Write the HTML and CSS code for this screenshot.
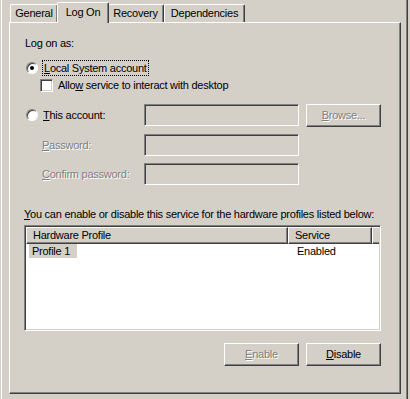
FILE: index.html
```html
<!DOCTYPE html>
<html lang="en">

<head>
    <meta charset="UTF-8">
    <title>Service Properties - Log On</title>
    <link rel="stylesheet" href="styles.css">
</head>

<body>
    <div class="window">
        <!-- Tabs -->
        <div class="tabs">
            <div class="tab tab-general">General</div>
            <div class="tab active tab-logon">Log On</div>
            <div class="tab tab-recovery">Recovery</div>
            <div class="tab tab-deps">Dependencies</div>
        </div>

        <div class="panel">
            <div class="caption">Log on as:</div>

            <div class="option-row">
                <span class="radio checked"></span>
                <span class="focus"><u>L</u>ocal System account</span>
            </div>

            <div class="check-row">
                <span class="checkbox"></span>
                <span>Allo<u>w</u> service to interact with desktop</span>
            </div>

            <!-- This account -->
            <div class="account">
                <div class="option-row inline">
                    <span class="radio"></span>
                    <span><u>T</u>his account:</span>
                </div>
                <div class="field"></div>
                <div class="btn disabled"><span><u>B</u>rowse...</span></div>

                <div class="field-label disabled"><u>P</u>assword:</div>
                <div class="field"></div>
                <div></div>

                <div class="field-label disabled"><u>C</u>onfirm password:</div>
                <div class="field"></div>
                <div></div>
            </div>

            <div class="caption profiles-caption"><u>Y</u>ou can enable or disable this service for the hardware profiles listed below:</div>

            <!-- Hardware profiles list -->
            <div class="list">
                <div class="list-head">
                    <div class="col-head col-profile">Hardware Profile</div>
                    <div class="col-head col-service">Service</div>
                    <div class="col-head col-fill"></div>
                </div>
                <div class="list-row">
                    <div class="cell-profile"><span class="selected">Profile 1</span></div>
                    <div class="cell-service">Enabled</div>
                </div>
            </div>

            <div class="buttons">
                <div class="btn disabled"><span><u>E</u>nable</span></div>
                <div class="btn"><span><u>D</u>isable</span></div>
            </div>
        </div>
    </div>
</body>

</html>
```

FILE: styles.css
```css
body {
    margin: 0;
    padding: 0;
    background-color: #d4d0c8;
    font-family: "Liberation Sans", Arial, sans-serif;
    font-size: 11px;
    line-height: 13px;
    letter-spacing: -0.25px;
    color: #000;
}

u {
    text-decoration: underline;
    text-underline-offset: 1px;
}

.window {
    margin-left: 1px;
    width: 405px;
    height: 399px;
    border-left: 1px solid #fff;
    border-right: 1px solid #404040;
    box-shadow: inset -1px 0 #808080;
}

/* Tabs */
.tabs {
    display: flex;
    align-items: flex-end;
    height: 22px;
    padding-left: 8px;
}

.tab {
    position: relative;
    height: 18px;
    line-height: 17px;
    text-align: center;
    white-space: nowrap;
    border-top: 1px solid #fff;
    border-left: 1px solid #fff;
    border-right: 1px solid #404040;
    border-radius: 2px 2px 0 0;
    box-shadow: inset -1px 0 #808080;
    box-sizing: border-box;
}

.tab-general {
    width: 48px;
}

.tab-logon {
    width: 52px;
}

.tab-recovery {
    width: 56px;
}

.tab-deps {
    width: 81px;
}

.tab.active {
    z-index: 1;
    height: 21px;
    line-height: 18px;
    margin: 0 -1px -1px -1px;
    background-color: #d4d0c8;
}

.tab.active + .tab {
    border-left: none;
}

/* Panel */
.panel {
    margin-left: 7px;
    width: 392px;
    height: 372px;
    box-sizing: border-box;
    padding: 0 19px 0 14px;
    border-top: 1px solid #fff;
    border-left: 1px solid #fff;
    border-right: 1px solid #404040;
    border-bottom: 1px solid #404040;
    box-shadow: inset -1px -1px #808080;
}

.caption {
    margin-top: 14px;
    padding-left: 1px;
    white-space: nowrap;
}

.option-row {
    display: flex;
    align-items: center;
    height: 15px;
    margin-top: 10px;
    padding-left: 2px;
    white-space: nowrap;
}

.option-row.inline {
    margin-top: 0;
    height: 22px;
}

.radio {
    position: relative;
    width: 12px;
    height: 12px;
    margin-right: 5px;
    box-sizing: border-box;
    border-radius: 50%;
    background-color: #fff;
    border: 1px solid;
    border-color: #808080 #fff #fff #808080;
    box-shadow: inset 1px 1px #404040;
    flex-shrink: 0;
}

.radio.checked::after {
    content: "";
    position: absolute;
    left: 3px;
    top: 3px;
    width: 4px;
    height: 4px;
    border-radius: 50%;
    background-color: #000;
}

.focus {
    outline: 1px dotted #000;
    outline-offset: 0;
    padding: 0 1px;
    line-height: 14px;
}

.check-row {
    display: flex;
    align-items: center;
    height: 13px;
    margin-top: 4px;
    padding-left: 16px;
    white-space: nowrap;
}

.checkbox {
    width: 13px;
    height: 13px;
    margin-right: 5px;
    box-sizing: border-box;
    background-color: #fff;
    border: 1px solid;
    border-color: #808080 #fff #fff #808080;
    box-shadow: inset 1px 1px #404040, inset -1px -1px #d4d0c8;
}

/* Account fields */
.account {
    display: grid;
    grid-template-columns: 113px 155px 75px;
    column-gap: 7px;
    row-gap: 7px;
    margin-top: 12px;
}

.field {
    height: 22px;
    box-sizing: border-box;
    background-color: #d4d0c8;
    border: 1px solid;
    border-color: #808080 #fff #fff #808080;
    box-shadow: inset 1px 1px #404040, inset -1px -1px #d4d0c8;
}

.field-label {
    display: flex;
    align-items: center;
    padding-left: 18px;
    white-space: nowrap;
}

.disabled {
    color: #808080;
    text-shadow: 1px 1px #fff;
}

.btn {
    display: flex;
    align-items: center;
    justify-content: center;
    height: 23px;
    box-sizing: border-box;
    border: 1px solid;
    border-color: #fff #404040 #404040 #fff;
    box-shadow: inset -1px -1px #808080;
}

.profiles-caption {
    margin-top: 23px;
    padding-left: 0;
}

/* List */
.list {
    margin-top: 4px;
    height: 106px;
    box-sizing: border-box;
    background-color: #fff;
    border: 1px solid;
    border-color: #808080 #fff #fff #808080;
    box-shadow: inset 1px 1px #404040, inset -1px -1px #d4d0c8;
    padding: 1px;
}

.list-head {
    display: flex;
    height: 17px;
}

.col-head {
    box-sizing: border-box;
    height: 17px;
    line-height: 15px;
    padding-left: 6px;
    background-color: #d4d0c8;
    border: 1px solid;
    border-color: #fff #404040 #404040 #fff;
    box-shadow: inset -1px -1px #808080;
}

.col-profile {
    width: 262px;
}

.col-service {
    width: 84px;
}

.col-fill {
    flex: 1;
    border-right: none;
    box-shadow: inset 0 -1px #808080;
}

.list-row {
    display: flex;
    height: 14px;
    line-height: 14px;
}

.cell-profile {
    width: 262px;
    padding-left: 3px;
}

.selected {
    display: inline-block;
    padding: 0 7px 0 3px;
    background-color: #d4d0c8;
}

.cell-service {
    padding-left: 6px;
}

.buttons {
    display: flex;
    justify-content: flex-end;
    gap: 7px;
    margin-top: 12px;
}

.buttons .btn {
    width: 75px;
}
```
